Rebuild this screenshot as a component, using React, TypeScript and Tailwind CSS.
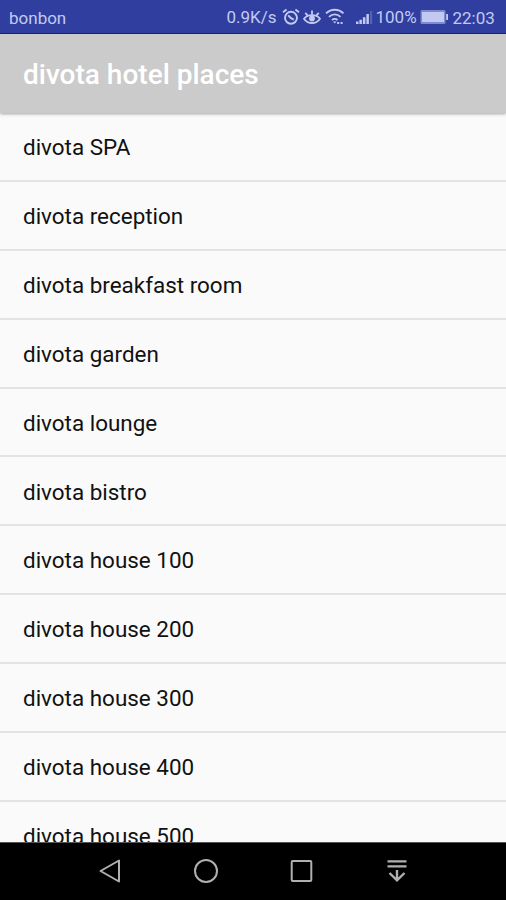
const places = [
  'divota SPA',
  'divota reception',
  'divota breakfast room',
  'divota garden',
  'divota lounge',
  'divota bistro',
  'divota house 100',
  'divota house 200',
  'divota house 300',
  'divota house 400',
  'divota house 500',
];

function AlarmIcon() {
  return (
    <svg className="ml-[5px] h-[18px] w-[18px] shrink-0" viewBox="0 0 18 18" fill="none" stroke="currentColor" strokeWidth="1.9">
      <circle cx="9" cy="9.8" r="6" />
      <path d="M1 4.2 4.6 1.4M17 4.2 13.4 1.4M6.2 7.4l2.8 2.8 2.8 1.4" />
    </svg>
  );
}

function EyeIcon() {
  return (
    <svg className="ml-[3px] h-[18px] w-[18px] shrink-0" viewBox="0 0 18 18" fill="none" stroke="currentColor" strokeWidth="1.8">
      <path d="M1 10.7C4.8 5.8 13.2 5.8 17 10.7 13.2 16.4 4.8 16.4 1 10.7Z" />
      <circle cx="9" cy="10.5" r="2.9" fill="currentColor" stroke="none" />
      <path d="M9 2.4v4M2.3 4.8l2.4 2.8M15.7 4.8l-2.4 2.8" />
    </svg>
  );
}

function WifiIcon() {
  return (
    <svg className="ml-[4px] h-[18px] w-[20px] shrink-0" viewBox="0 0 20 18" fill="none" stroke="currentColor" strokeWidth="1.8">
      <path d="M1 5.4C6 .5 13.5.5 18.5 5.4M4 8.8C7.4 5.5 12.1 5.5 15.5 8.8M7 12c1.8-1.5 3.8-1.5 5.5 0" />
      <path d="M8 13.6h3.6L9.8 15.6Z" fill="currentColor" stroke="none" />
      <path d="M12.2 15h2M15.6 15h2" strokeWidth="2" />
    </svg>
  );
}

function SignalIcon() {
  return (
    <svg className="ml-[11px] h-[18px] w-[17px] shrink-0" viewBox="0 0 17 18" fill="currentColor">
      <path d="M0 13.6h2.5V16H0zM3.4 11.8h2.5V16H3.4zM6.9 9.2h2.5V16H6.9zM10.4 6h2.5v10h-2.5z" />
      <path d="M14 3h2.2v13H14z" opacity=".25" />
    </svg>
  );
}

function BatteryIcon() {
  return (
    <svg className="ml-[5px] h-[16px] w-[28px] shrink-0" viewBox="0 0 28 16" fill="currentColor">
      <rect x=".5" y="1" width="25" height="14" rx="1.5" opacity=".55" />
      <rect x="2" y="3" width="22" height="10" />
      <rect x="26.2" y="5" width="1.8" height="6" />
    </svg>
  );
}

function StatusBar() {
  return (
    <header className="flex h-[34px] shrink-0 items-center border-b border-[#1020a0] bg-[#303f9f] pr-[10px] pl-[9px] text-[17px] text-[#c3caf2]">
      <span className="mt-[2px] w-[217.5px] leading-5">bonbon</span>
      <span className="mt-px w-[50px] leading-5 whitespace-nowrap">0.9K/s</span>
      <AlarmIcon />
      <EyeIcon />
      <WifiIcon />
      <SignalIcon />
      <span className="mt-px ml-[3px] w-[39px] leading-5">100%</span>
      <BatteryIcon />
      <span className="mt-[2px] ml-[5px] leading-5">22:03</span>
    </header>
  );
}

function NavigationBar() {
  return (
    <nav className="flex h-[58px] shrink-0 items-center border-t border-[#555] bg-black pb-[2px] pl-[98px] text-[#b0b0b0]">
      <svg className="h-[26px] w-[24px]" viewBox="0 0 24 26" fill="none" stroke="currentColor" strokeWidth="2" strokeLinejoin="round">
        <path d="M21 2.5v21L2.5 13Z" />
      </svg>
      <svg className="ml-[71px] h-[26px] w-[26px]" viewBox="0 0 26 26" fill="none" stroke="currentColor" strokeWidth="2">
        <circle cx="13" cy="13" r="11" />
      </svg>
      <svg className="ml-[71px] h-[26px] w-[24px]" viewBox="0 0 24 26" fill="none" stroke="currentColor" strokeWidth="2">
        <rect x="1.7" y="3" width="19.6" height="20" rx="1" />
      </svg>
      <svg className="ml-[73px] h-[26px] w-[20px]" viewBox="0 0 20 26" fill="none" stroke="currentColor" strokeWidth="2.4">
        <path d="M.5 3.4h19M.5 8.4h19M10 12v10M2.5 15l7.5 7.3 7.5-7.3" />
      </svg>
    </nav>
  );
}

export default function App() {
  return (
    <div className="flex h-[900px] w-full flex-col overflow-hidden bg-[#fafafa] font-['Roboto',sans-serif]">
      <StatusBar />
      <div className="relative z-10 flex h-[79px] shrink-0 items-center bg-[#cbcbcb] pl-[23px] shadow-[0_1px_3px_rgba(0,0,0,0.35)]">
        <h1 className="mt-[3px] text-[28px] font-medium text-white">divota hotel places</h1>
      </div>
      <ul className="min-h-0 flex-1 overflow-hidden">
        {places.map((place) => (
          <li key={place} className="flex h-[68.9px] items-center border-b-2 border-[#e3e3e3] pt-[3px] pl-[23px] text-[22.45px] text-[#111]">
            {place}
          </li>
        ))}
      </ul>
      <NavigationBar />
    </div>
  );
}
